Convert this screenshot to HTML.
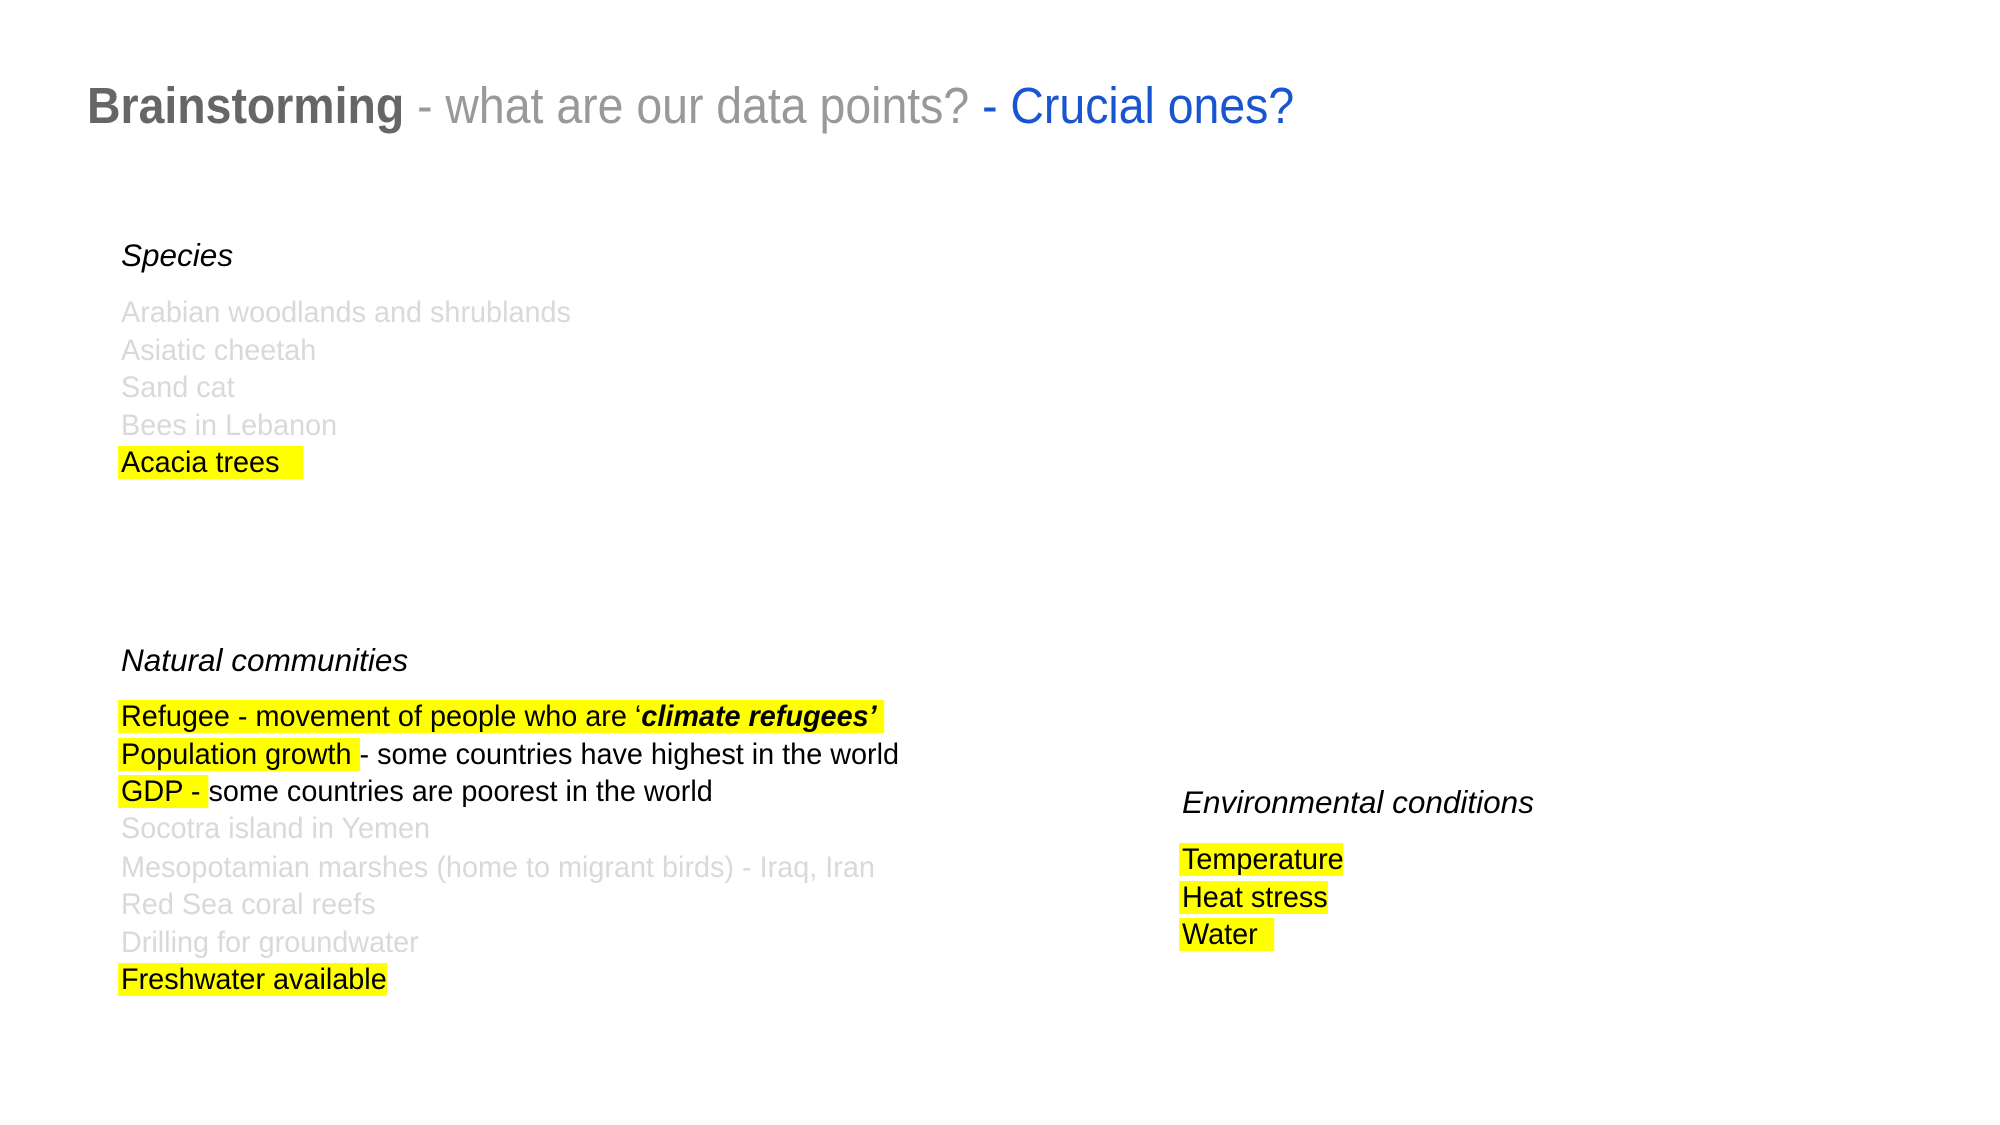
<!DOCTYPE html>
<html><head><meta charset="utf-8"><style>
body{margin:0;width:2000px;height:1125px;background:#fff;position:relative;overflow:hidden;font-family:"Liberation Sans",sans-serif}
.t{position:absolute;left:87px;top:76px;font-size:51px;line-height:60px;white-space:nowrap;transform:scaleX(0.91);transform-origin:left}
.l{position:absolute;font-size:30px;line-height:34px;white-space:nowrap;transform:scaleX(0.96);transform-origin:left;color:#000}
.hd{font-size:31.5px;transform:scaleX(1.0)}
.g{color:#d9d9d9}
.h{background:#ffff00;padding-left:3px;margin-left:-3px}
.i{font-style:italic}
</style></head><body>
<div class="t"><b style="color:#666">Brainstorming</b><span style="color:#999"> - what are our data points?</span><span style="color:#1a55d0"> - Crucial ones?</span></div>

<div class="l i hd" style="left:121px;top:238px">Species</div>
<div class="l g" style="left:121px;top:296px">Arabian woodlands and shrublands</div>
<div class="l g" style="left:121px;top:334px">Asiatic cheetah</div>
<div class="l g" style="left:121px;top:371px">Sand cat</div>
<div class="l g" style="left:121px;top:409px">Bees in Lebanon</div>
<div class="l" style="left:121px;top:446px"><span class="h">Acacia trees &nbsp;&nbsp;</span></div>

<div class="l i hd" style="left:121px;top:643px">Natural communities</div>
<div class="l" style="left:121px;top:700px"><span class="h">Refugee - movement of people who are ‘<b class="i">climate refugees’</b>&nbsp;</span></div>
<div class="l" style="left:121px;top:738px"><span class="h">Population growth </span> - some countries have highest in the world</div>
<div class="l" style="left:121px;top:775px"><span class="h">GDP - </span>some countries are poorest in the world</div>
<div class="l g" style="left:121px;top:812px">Socotra island in Yemen</div>
<div class="l g" style="left:121px;top:851px">Mesopotamian marshes (home to migrant birds) - Iraq, Iran</div>
<div class="l g" style="left:121px;top:888px">Red Sea coral reefs</div>
<div class="l g" style="left:121px;top:926px">Drilling for groundwater</div>
<div class="l" style="left:121px;top:963px"><span class="h">Freshwater available </span></div>

<div class="l i hd" style="left:1182px;top:785px">Environmental conditions</div>
<div class="l" style="left:1182px;top:843px"><span class="h">Temperature </span></div>
<div class="l" style="left:1182px;top:881px"><span class="h">Heat stress</span></div>
<div class="l" style="left:1182px;top:918px"><span class="h">Water &nbsp;</span></div>
</body></html>
